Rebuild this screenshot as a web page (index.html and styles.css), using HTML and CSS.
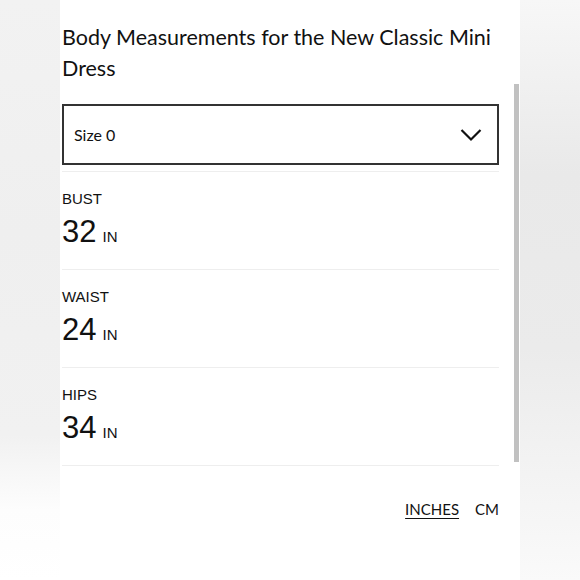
FILE: index.html
```html
<!DOCTYPE html>
<html lang="en">
<head>
<meta charset="utf-8">
<title>Body Measurements</title>
<link rel="stylesheet" href="styles.css">
</head>
<body>
<div class="page">
  <div class="side side-left"></div>
  <main class="panel">
    <h1 class="title">Body Measurements for the New Classic Mini Dress</h1>
    <div class="select">
      <span class="select-label">Size 0</span>
      <svg class="chevron" width="22" height="14" viewBox="0 0 22 14" aria-hidden="true">
        <path d="M1.5 2 L11 11.5 L20.5 2" fill="none" stroke="#111" stroke-width="2.2"/>
      </svg>
    </div>
    <div class="rows">
      <div class="row">
        <div class="label">BUST</div>
        <div class="value"><span class="num">32</span><span class="unit">IN</span></div>
      </div>
      <div class="row">
        <div class="label">WAIST</div>
        <div class="value"><span class="num">24</span><span class="unit">IN</span></div>
      </div>
      <div class="row">
        <div class="label">HIPS</div>
        <div class="value"><span class="num">34</span><span class="unit">IN</span></div>
      </div>
    </div>
    <div class="units">
      <span class="unit-opt active">INCHES</span>
      <span class="unit-opt">CM</span>
    </div>
    <div class="scrollbar"></div>
  </main>
  <div class="side side-right"></div>
</div>
</body>
</html>
```
FILE: styles.css
```css
html, body {
  margin: 0;
  padding: 0;
  background: #fff;
}
.page {
  display: flex;
  width: 580px;
  height: 580px;
  overflow: hidden;
}
.side {
  flex: 0 0 60px;
}
.side-left {
  background: linear-gradient(to bottom, #f2f2f2 0%, #efefef 40%, #f1f1f1 75%, #fdfdfd 88%, #fff 100%);
}
.side-right {
  background: linear-gradient(to bottom, #f7f7f7 0%, #e9e9e9 30%, #ebebeb 60%, #f6f6f6 90%, #fafafa 100%);
}
.panel {
  position: relative;
  flex: 0 0 460px;
  background: #fff;
  padding: 22px 21px 0 2px;
  box-sizing: border-box;
  display: flex;
  flex-direction: column;
}
.title {
  margin: 0;
  font-family: "Lato", "Liberation Sans", sans-serif;
  font-weight: 400;
  font-size: 21.5px;
  line-height: 31px;
  color: #111;
}
.select {
  margin-top: 20px;
  height: 61px;
  box-sizing: border-box;
  border: 2px solid #333;
  display: flex;
  align-items: center;
  justify-content: space-between;
  padding: 0 15px 0 10px;
}
.select-label {
  font-family: "Lato", "Liberation Sans", sans-serif;
  font-size: 16px;
  color: #111;
}
.chevron {
  display: block;
}
.rows {
  margin-top: 6px;
  border-top: 1px solid #eeeeee;
}
.row {
  height: 98px;
  box-sizing: border-box;
  border-bottom: 1px solid #eeeeee;
  padding-top: 18px;
  font-family: "Liberation Sans", Arial, sans-serif;
  color: #111;
}
.label {
  font-size: 15px;
  line-height: 18px;
}
.value {
  margin-top: 6px;
  line-height: 36px;
}
.num {
  font-size: 31px;
}
.unit {
  font-size: 15px;
  margin-left: 6px;
}
.units {
  display: flex;
  justify-content: flex-end;
  gap: 16px;
  margin-top: 34px;
  font-family: "Lato", "Liberation Sans", sans-serif;
  font-size: 15px;
  line-height: 18px;
  color: #111;
}
.unit-opt.active {
  text-decoration: underline;
  text-underline-offset: 3px;
}
.scrollbar {
  position: absolute;
  left: 454px;
  top: 84px;
  width: 5px;
  height: 378px;
  background: #c1c1c1;
}
```
